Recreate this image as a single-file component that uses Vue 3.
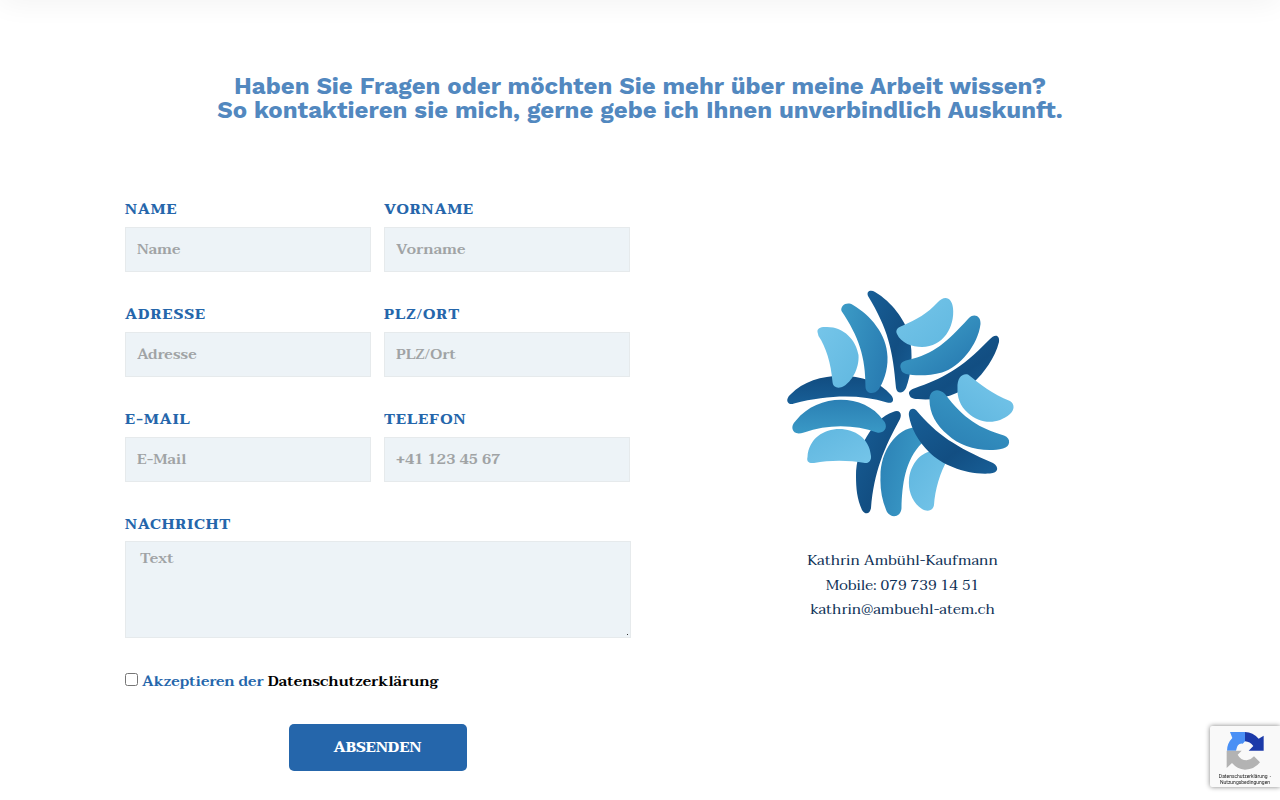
<template>
  <div class="page">
    <div class="top-shadow"></div>

    <h2 class="headline">
      Haben Sie Fragen oder möchten Sie mehr über meine Arbeit wissen?<br />
      So kontaktieren sie mich, gerne gebe ich Ihnen unverbindlich Auskunft.
    </h2>

    <div class="columns">
      <form class="form" @submit.prevent>
        <div class="fields">
          <label class="field" v-for="f in fields" :key="f.key">
            <span class="label">{{ f.label }}</span>
            <input v-model="form[f.key]" :type="f.type" :placeholder="f.placeholder" />
          </label>
        </div>

        <label class="field message">
          <span class="label">Nachricht</span>
          <textarea v-model="form.message" placeholder="Text"></textarea>
        </label>

        <label class="accept">
          <input v-model="form.accepted" type="checkbox" />
          <span>Akzeptieren der <a>Datenschutzerklärung</a></span>
        </label>

        <button type="submit" class="btn-submit">Absenden</button>
      </form>

      <aside class="contact">
        <svg class="logo" viewBox="0 0 240 240">
          <defs>
            <linearGradient id="dark" x1="0" y1="0" x2="1" y2="1">
              <stop offset="0" stop-color="#185f97" />
              <stop offset="0.6" stop-color="#124e82" />
              <stop offset="1" stop-color="#185f97" />
            </linearGradient>
            <linearGradient id="dark-down" x1="0" y1="0" x2="0" y2="1">
              <stop offset="0" stop-color="#114c80" />
              <stop offset="1" stop-color="#185f97" />
            </linearGradient>
            <linearGradient id="mid-down" x1="0" y1="0" x2="0" y2="1">
              <stop offset="0" stop-color="#2b80b4" />
              <stop offset="1" stop-color="#3a99c6" />
            </linearGradient>
            <linearGradient id="mid-right" x1="0" y1="0" x2="1" y2="0.5">
              <stop offset="0" stop-color="#3c9bc6" />
              <stop offset="1" stop-color="#2a7eb3" />
            </linearGradient>
            <linearGradient id="mid-corner" x1="0" y1="0" x2="1" y2="1">
              <stop offset="0.2" stop-color="#3c9bc6" />
              <stop offset="0.8" stop-color="#2a7eb3" />
            </linearGradient>
            <linearGradient id="mid-up" x1="0.2" y1="1" x2="0.8" y2="0">
              <stop offset="0" stop-color="#2b80b4" />
              <stop offset="1" stop-color="#3a99c6" />
            </linearGradient>
            <linearGradient id="mid-left" x1="0" y1="0" x2="1" y2="0.5">
              <stop offset="0" stop-color="#2b80b4" />
              <stop offset="1" stop-color="#3a99c6" />
            </linearGradient>
            <linearGradient id="light" x1="0" y1="0" x2="1" y2="1">
              <stop offset="0" stop-color="#75c5e9" />
              <stop offset="1" stop-color="#61b8e0" />
            </linearGradient>
            <linearGradient id="light-up" x1="0" y1="1" x2="0.8" y2="0">
              <stop offset="0" stop-color="#5fb6df" />
              <stop offset="1" stop-color="#75c5e9" />
            </linearGradient>
            <linearGradient id="light-rev" x1="0" y1="0" x2="1" y2="1">
              <stop offset="0" stop-color="#5fb6df" />
              <stop offset="1" stop-color="#75c5e9" />
            </linearGradient>
          </defs>
          <path v-for="(p, i) in petals" :key="i" :d="p.d" :fill="`url(#${p.fill})`" />
        </svg>
        <p class="address">
          <span>Kathrin Ambühl-Kaufmann</span>
          <span>Mobile: 079 739 14 51</span>
          <span>kathrin@ambuehl-atem.ch</span>
        </p>
      </aside>
    </div>

    <!-- reCAPTCHA badge -->
    <div class="badge">
      <svg class="badge-logo" viewBox="75 46 120 120">
        <path fill="#4a90f5" d="M81 108 Q81 86 97 70 L90 52 H135 V80 L128 87 Q112 84 108 108Z" />
        <path fill="#1c3aa9" d="M135 52 Q159 53 176 72 L191 63 V108 H146 L160 94 Q150 81 135 80Z" />
        <path fill="#b3b3b3" d="M80 108 H125 L113 120 Q122 137 140 137 Q154 135 162 125 L180 143 Q164 164 135 165 Q111 163 96 145 L80 160Z" />
      </svg>
      <div class="badge-text"><span class="first">Datenschutzerklärung -</span><br />Nutzungsbedingungen</div>
    </div>
  </div>
</template>

<script setup>
import { reactive } from 'vue'

const form = reactive({
  name: '',
  firstname: '',
  address: '',
  city: '',
  email: '',
  phone: '',
  message: '',
  accepted: false,
})

const fields = [
  { key: 'name', label: 'Name', placeholder: 'Name', type: 'text' },
  { key: 'firstname', label: 'Vorname', placeholder: 'Vorname', type: 'text' },
  { key: 'address', label: 'Adresse', placeholder: 'Adresse', type: 'text' },
  { key: 'city', label: 'PLZ/Ort', placeholder: 'PLZ/Ort', type: 'text' },
  { key: 'email', label: 'E-Mail', placeholder: 'E-Mail', type: 'email' },
  { key: 'phone', label: 'Telefon', placeholder: '+41 123 45 67', type: 'tel' },
]

// painted back to front
const petals = [
  { fill: 'dark-down', d: 'M9 118.500 C6 116 7 112.500 11 109 C34 84.500 90 84.500 111 110 C115 115 113 119 107 117.500 C80 109.500 50 109.500 14 118.500 Q11 119.500 9 118.500Z' },
  { fill: 'dark', d: 'M88 11 C86 6 91 4.500 95 7 C112 17 125 35 129 50 C134 70 131 90 126 103 C123 109 117 109 116 103 C113 65 108 44 88 11Z' },
  { fill: 'dark', d: 'M129.500 110 C128 107 130 105 134 103.500 C163 93 180 85 209 55 C215 48 220 50 219 57 C215 73 204 88 193 98 C178 111 155 116 138 114 C132 114 130 112 129.500 110Z' },
  { fill: 'dark', d: 'M76 191 C76 163 93 134 113 127 C119 124 122.500 128 120 134 C104 163 94 187 91 223 C90 229.500 85 230 82 225 C77 214 76 203 76 191Z' },
  { fill: 'mid-down', d: 'M12.500 144 Q11.500 140 16 135.500 C38 108 84 108 103 135 C109 141 105 149 97 147.500 C75 139.500 48 139 24 147.500 C17 149.500 13.500 148 12.500 144Z' },
  { fill: 'light-rev', d: 'M27.500 172 C30 135 88 135 91 171 C91.500 175 89 178.500 85 178 C68 175 50 175 34 178 C28 178.500 26.500 176 27.500 172Z' },
  { fill: 'light', d: 'M37.500 47 C37 43 41 41.500 47 42 C64 42 76 55 78.500 70 C79.500 84 71 97 64 101 C59 104 53 103 52.500 97 C51 78 46 62 38.500 51Z' },
  { fill: 'mid-right', d: 'M61.500 26 C60 20.500 67 16 73 20 C90 30 107 49 107.500 72 C108 86 103 98 98.500 104.500 C94 110 86 109 85.500 102 C85.500 72 79 52 61.500 26Z' },
  { fill: 'light', d: 'M117 49 C115 45 118 42 123 40.500 C136 35 148 28 157 18 C165 9 172 13 173 23 C175 42 163 62 142 62 C132 62 121 58 117 49Z' },
  { fill: 'mid-corner', d: 'M121 84 C119 79 122 76 128 75 C154 69 167 57 188 34 C193 28 201 30 200.500 39 C198 60 180 82 162 87.500 C149 91 135 91 126 89 C123 88 121 86 121 84Z' },
  { fill: 'light-up', d: 'M177.500 103 C177 93 182 88 188 89.500 C200 99 212 109 230 116 C235 119 234.500 125 230 129 C216 141 199 138 188 128 C180 121 177 112 177.500 103Z' },
  { fill: 'mid-up', d: 'M149.500 115 C149 105 158 102 165 109 C184 134 199 143 224 150.500 C231.500 153 230.500 162 223 163.500 C204 168 180 162 168 150 C156 140 149.500 128 149.500 115Z' },
  { fill: 'light-rev', d: 'M129 195 C130 181 139 168 152 166 L168 174 C160 187 155 205 154 220 C153 226 147 227 142 224 C133 218 128 207 129 195Z' },
  { fill: 'mid-left', d: 'M100.500 192 C100 168 115 143 137 142 L142 158 C125 175 122 200 121.500 223 C121 232.500 111 233.500 107 227 C102 216 100 204 100.500 192Z' },
  { fill: 'dark', d: 'M129 131 C128 125 132 122 136 125 C157 150 176 162 213 178 C219.500 182 218.500 188 210 188.500 C186 190 162 180 149 167 C138 156 131 143 129 131Z' },
]
</script>

<style>
body { margin: 0; background: #fff; overflow: hidden; }
</style>

<style scoped>
.page {
  height: 800px;
  overflow: hidden;
  background: #fff;
  color: #2566ab;
  font-family: Taviraj, "Liberation Serif", serif;
}

.top-shadow {
  height: 20px;
  margin-top: -20px;
  box-shadow: 0 0 30px rgba(0, 0, 0, 0.07);
}

.headline {
  margin: 74px 0 0;
  font-family: "Work Sans", Inter, sans-serif;
  font-size: 24px;
  font-weight: 700;
  line-height: 24px;
  letter-spacing: 0.015px;
  color: #5288bf;
  text-align: center;
  white-space: nowrap;
}

.columns {
  display: grid;
  grid-template-columns: 506px 240px;
  column-gap: 149px;
  padding: 77px 0 0 125px;
}

.form { display: flex; flex-direction: column; }

.fields {
  display: grid;
  grid-template-columns: 246px 246px;
  gap: 32px 13px;
}

.field { display: flex; flex-direction: column; }

.label {
  height: 28px;
  line-height: 20px;
  font-size: 15px;
  font-weight: 700;
  letter-spacing: 0.9px;
  text-transform: uppercase;
}

.field input,
.field textarea {
  box-sizing: border-box;
  width: 100%;
  border: 1px solid #e6eaec;
  border-radius: 0;
  background: #edf3f7;
  color: #2566ab;
  font: 600 15px Taviraj, "Liberation Serif", serif;
  outline: none;
}

.field input { height: 45px; padding: 0 11px 2px; }

.field textarea {
  display: block;
  height: 97px;
  padding: 3px 14px;
  resize: none;
}

.field ::placeholder { color: #a0a3a5; opacity: 1; }

.message { position: relative; margin-top: 32px; }
.message .label { height: 27px; }

/* resize grip */
.message::after {
  content: '';
  position: absolute;
  right: 3px;
  bottom: 3px;
  width: 1px;
  height: 1px;
  background: #333;
}

.accept {
  display: flex;
  align-items: center;
  height: 20px;
  margin-top: 33px;
  font-size: 15px;
  font-weight: 600;
  white-space: nowrap;
}

.accept input { width: 13px; height: 13px; margin: 0 4px 4px 0; }
.accept a { color: #000; }

.btn-submit {
  align-self: center;
  width: 178px;
  height: 47px;
  margin-top: 33px;
  padding: 0 1px 2px 0;
  border: none;
  border-radius: 5px;
  background: #2566ab;
  color: #fff;
  font: 700 15px Taviraj, "Liberation Serif", serif;
  text-transform: uppercase;
}

.contact {
  display: flex;
  flex-direction: column;
  align-items: center;
  padding-top: 86px;
}

.logo { display: block; width: 240px; height: 240px; }

.address {
  margin: 23px 0 0 5px;
  font-size: 15px;
  line-height: 24.5px;
  text-align: center;
  color: #0f3257;
}

.address span { display: block; white-space: nowrap; }

.badge {
  position: fixed;
  top: 726px;
  right: 0;
  width: 70px;
  height: 61px;
  border-radius: 2px 0 0 2px;
  background: #f9f9f9;
  box-shadow: 0 0 5px #808080;
}

.badge-logo { display: block; width: 40px; height: 40px; margin: 4px 0 0 15px; }

.badge-text {
  margin-top: 3px;
  font: 5px/6px Roboto, sans-serif;
  text-align: center;
  white-space: nowrap;
  color: #222;
}

.badge-text .first { word-spacing: 1px; }
</style>
